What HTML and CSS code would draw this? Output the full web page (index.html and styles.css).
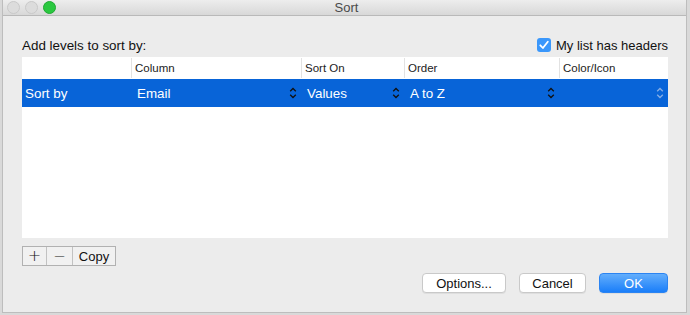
FILE: index.html
```html
<!DOCTYPE html>
<html lang="en">
<head>
    <meta charset="UTF-8">
    <title>Sort</title>
    <link rel="stylesheet" href="styles.css">
</head>
<body>
    <div class="window">
        <div class="titlebar">
            <div class="lights">
                <span class="light off"></span>
                <span class="light off"></span>
                <span class="light green"></span>
            </div>
            <div class="title">Sort</div>
            <div></div>
        </div>

        <div class="content">
            <div class="top-row">
                <span class="label">Add levels to sort by:</span>
                <label class="check">
                    <span class="box">
                        <svg width="14" height="14" viewBox="0 0 14 14"><path d="M3.3 7.3 L5.9 10 L10.8 3.8" fill="none" stroke="#fff" stroke-width="1.8" stroke-linecap="round" stroke-linejoin="round"/></svg>
                    </span>
                    My list has headers
                </label>
            </div>

            <div class="table">
                <div class="row head">
                    <div class="cell"></div>
                    <div class="cell"><span class="sep">Column</span></div>
                    <div class="cell"><span class="sep">Sort On</span></div>
                    <div class="cell"><span class="sep">Order</span></div>
                    <div class="cell"><span class="sep">Color/Icon</span></div>
                </div>
                <div class="row selected">
                    <div class="cell first">Sort by</div>
                    <div class="cell pop">Email <svg class="chev" width="8" height="12" viewBox="0 0 8 12"><path d="M1.2 4.3 L4 1.5 L6.8 4.3 M1.2 7.7 L4 10.5 L6.8 7.7" fill="none" stroke="#111" stroke-width="1.3"/></svg></div>
                    <div class="cell pop">Values <svg class="chev" width="8" height="12" viewBox="0 0 8 12"><path d="M1.2 4.3 L4 1.5 L6.8 4.3 M1.2 7.7 L4 10.5 L6.8 7.7" fill="none" stroke="#111" stroke-width="1.3"/></svg></div>
                    <div class="cell pop">A to Z <svg class="chev" width="8" height="12" viewBox="0 0 8 12"><path d="M1.2 4.3 L4 1.5 L6.8 4.3 M1.2 7.7 L4 10.5 L6.8 7.7" fill="none" stroke="#111" stroke-width="1.3"/></svg></div>
                    <div class="cell pop"><span></span><svg class="chev" width="8" height="12" viewBox="0 0 8 12"><path d="M1.2 4.3 L4 1.5 L6.8 4.3 M1.2 7.7 L4 10.5 L6.8 7.7" fill="none" stroke="#86aee6" stroke-width="1.3"/></svg></div>
                </div>
            </div>

            <div class="segments">
                <button class="seg">+</button>
                <button class="seg">&minus;</button>
                <button class="seg">Copy</button>
            </div>

            <div class="actions">
                <button class="btn options">Options...</button>
                <button class="btn cancel">Cancel</button>
                <button class="btn ok">OK</button>
            </div>
        </div>
    </div>
</body>
</html>
```

FILE: styles.css
```css
* {
    margin: 0;
    padding: 0;
    box-sizing: border-box;
    font-family: 'Liberation Sans', Arial, sans-serif;
}

body {
    width: 690px;
    height: 315px;
    background: #d9d9d9;
    overflow: hidden;
}

.window {
    margin-left: 2px;
    width: 685px;
    height: 313px;
    background: #ececec;
    border: 1px solid #bdbdbd;
    border-top: none;
    display: flex;
    flex-direction: column;
}

.titlebar {
    height: 16px;
    display: grid;
    grid-template-columns: 1fr auto 1fr;
    align-items: center;
    background: linear-gradient(#ededed, #d8d8d8);
    border-bottom: 1px solid #b9b9b9;
    padding-left: 4px;
}

.lights {
    display: flex;
    gap: 5px;
}

.light {
    width: 13px;
    height: 13px;
    border-radius: 50%;
}

.light.off {
    background: #dcdcdc;
    border: 1px solid #c9c9c9;
}

.light.green {
    background: #2bc840;
    border: 1px solid #20a933;
}

.title {
    font-size: 13px;
    color: #4a4a4a;
}

.content {
    flex: 1;
    padding: 20px 18px 0 19px;
    display: flex;
    flex-direction: column;
}

.top-row {
    height: 18px;
    margin-bottom: 3px;
    display: flex;
    justify-content: space-between;
    align-items: center;
    font-size: 13px;
    color: #111;
}

.label {
    font-size: 13.4px;
}

.check {
    display: flex;
    align-items: center;
    gap: 5px;
}

.box {
    width: 14px;
    height: 14px;
    border-radius: 3px;
    background: #3a97fb;
    display: flex;
}

.table {
    height: 181px;
    background: #fff;
}

.row {
    display: grid;
    grid-template-columns: 109px 170px 103px 155px 109px;
}

.head {
    height: 22px;
    font-size: 11.5px;
    color: #222;
}

.head .cell {
    padding: 1px 0;
}

.sep {
    display: block;
    height: 20px;
    line-height: 20px;
    border-left: 1px solid #e2e2e2;
    padding-left: 3px;
}

.selected {
    height: 28px;
    background: #0864d8;
    color: #fff;
    font-size: 13.4px;
}

.selected .cell {
    display: flex;
    align-items: center;
}

.first {
    padding-left: 3px;
}

.pop {
    justify-content: space-between;
    padding: 0 4px 0 6px;
}

.chev {
    display: block;
}

.segments {
    margin-top: 8px;
    display: flex;
    align-self: flex-start;
    border: 1px solid #b1b1b1;
    height: 20px;
    background: #f1f1f1;
}

.seg {
    border: none;
    background: none;
    font-size: 13px;
    color: #111;
    height: 18px;
    border-left: 1px solid #c2c2c2;
}

.seg:first-child {
    border-left: none;
    width: 23px;
    font-family: 'DejaVu Sans', sans-serif;
    font-weight: 200;
    font-size: 16px;
    line-height: 16px;
}

.seg:nth-child(2) {
    width: 26px;
    font-family: 'DejaVu Sans', sans-serif;
    font-weight: 200;
    font-size: 15px;
}

.seg:last-child {
    width: 43px;
}

.actions {
    margin-top: 7px;
    display: flex;
    justify-content: flex-end;
    gap: 13px;
}

.btn {
    height: 20px;
    font-size: 13px;
    border-radius: 4px;
    color: #111;
    background: #fff;
    border: 1px solid #c9c9c9;
    box-shadow: 0 1px 0 rgba(0, 0, 0, 0.06);
}

.options {
    width: 84px;
}

.cancel {
    width: 67px;
}

.ok {
    width: 69px;
    color: #fff;
    background: linear-gradient(#63aefc, #1a7ef9);
    border: 1px solid #2b84f2;
}
```
